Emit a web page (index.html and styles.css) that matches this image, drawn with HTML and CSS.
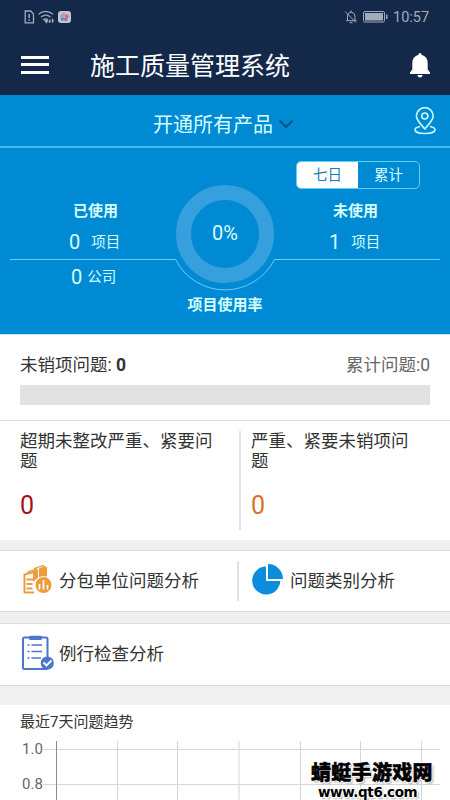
FILE: index.html
```html
<!DOCTYPE html>
<html lang="zh-CN">
<head>
<meta charset="utf-8">
<title>施工质量管理系统</title>
<link rel="stylesheet" href="styles.css">
</head>
<body>
<div class="app">
  <div class="status">
    <svg class="status-left" width="48" height="14" viewBox="0 0 48 14" fill="none" stroke="#a3abba" stroke-width="1.3">
      <path d="M1.2 1h5.5l2.8 3v8.8H1.2z"/><path d="M5.2 4v4M5.2 9.3v1.4" stroke-width="1.5"/>
      <path d="M14.5 4.2q7-5.5 14.5 0M17 7q5-3.8 9.5 0M19 9.8q2.6-2 5 0"/><path d="M21 10.5l1.5 2 1-2zM26 9.5v3M24.8 11l1.2 1.7M28.5 12.7v-3l1.2 1.4"/>
      <rect x="34" y="1" width="13" height="12" rx="3" fill="#c5c4d2" stroke="none"/>
      <g stroke="none" transform="translate(.8 0)"><circle cx="39" cy="4.8" r="1.900" fill="#c592ac"/><circle cx="42" cy="6.3" r="1.900" fill="#c67477"/><circle cx="41" cy="9.2" r="1.900" fill="#9874b8"/><circle cx="37.6" cy="9" r="1.900" fill="#7189ba"/><circle cx="36.9" cy="6.2" r="1.7" fill="#a19dbc"/></g>
    </svg>
    <svg class="status-right" width="44" height="14" viewBox="0 0 44 14" fill="none" stroke="#a3abba">
      <path d="M2 10.7h10.5M3.5 10V6q.2-3.5 3.5-3.9Q10.700 2.500 11 6v4M7 .5v1.600M5.500 12.700h3M1 1.500l11 11"/>
      <rect x="19.500" y="1.500" width="21" height="10.500" rx="1.500"/><rect x="21" y="3" width="18" height="7.500" fill="#a3abba" stroke="none"/><path d="M42.700 4.500v4.500" stroke-width="1.500"/>
    </svg>
    <span class="clock">10:57</span>
  </div>
  <header class="header">
    <div class="menu"><i></i><i></i><i></i></div>
    <h1>施工质量管理系统</h1>
    <svg class="bell" width="20" height="25" viewBox="0 0 20 25" fill="#fff"><path d="M8.500 1.800Q8.500 0 10 0t1.500 1.800Q17.700 3.500 17.700 10v6.500l2.300 3V21H0v-1.500l2.300-3V10Q2.300 3.500 8.500 1.800zM7.300 22h5.400q-.7 2.500-2.700 2.500T7.300 22z"/></svg>
  </header>
  <section class="hero">
    <div class="product">
      <span>开通所有产品</span>
      <svg class="chevron" width="16" height="10" viewBox="0 0 16 10" fill="none" stroke="#075389" stroke-width="2.200"><path d="M1.500 1.500L8 8l6.500-6.500"/></svg>
      <svg class="pin" width="22" height="28" viewBox="0 0 22 28" fill="none" stroke="#c9fbff" stroke-width="1.600"><path d="M10.800 22C7 17 2.400 13.500 2.400 9a8.400 8.400 0 0 1 16.800 0c0 4.500-4.600 8-8.400 13z"/><circle cx="10.800" cy="9" r="3"/><path d="M6 19.500c-3 .6-5 1.700-5 3.200 0 2.200 4.300 3.800 10 3.800s10-1.600 10-3.800c0-1.500-2-2.600-5-3.200"/></svg>
    </div>
    <div class="usage">
      <svg class="gauge" width="450" height="186" viewBox="0 0 450 186" fill="none">
        <circle cx="225" cy="86" r="41.500" stroke="#369fdd" stroke-width="15"/>
        <path d="M10 111.500H175.500A55.500 55.500 0 0 0 274.500 111.500H440" stroke="#6bc9fa"/>
      </svg>
      <div class="stats used">
        <h2>已使用</h2>
        <p class="project"><b>0</b><span>项目</span></p>
        <p class="company"><b>0</b><span>公司</span></p>
      </div>
      <div class="rate"><span class="percent">0%</span><h2>项目使用率</h2></div>
      <div class="right">
        <div class="tabs"><span class="active">七日</span><span>累计</span></div>
        <div class="stats unused"><h2>未使用</h2><p class="project"><b>1</b><span>项目</span></p></div>
      </div>
    </div>
  </section>
  <section class="issues">
    <div class="summary"><span>未销项问题: <b>0</b></span><span class="total">累计问题:0</span></div>
    <div class="bar"></div>
  </section>
  <section class="split">
    <div class="metric red"><p>超期未整改严重、紧要问题</p><strong>0</strong></div>
    <div class="metric orange"><p>严重、紧要未销项问题</p><strong>0</strong></div>
  </section>
  <section class="links double">
    <a class="link"><svg width="32" height="32" viewBox="0 0 32 32" fill="none" stroke="#ed9d3b" stroke-width="2">
      <path d="M2.500 28V9.500L12 7v9M4.500 14.500h7M4.500 19h6M4.500 23.500h6M2.500 27.500H12"/>
      <path d="M5 7.300L15 3.500 M12 3.500L22 .3" stroke-width="1.300"/>
      <path d="M8 6.500l8-2.500v9l-3 2V7zM17 3.300L23 1l2 1.500v10h-8z" fill="#ed9d3b" stroke="none"/>
      <circle cx="21.500" cy="20" r="8.500" fill="#ed9d3b" stroke="#fff" stroke-width="1"/><path d="M17.500 19v5.500M21.500 15v9.500M25.500 20v4.500" stroke="#fff" stroke-width="1.700"/></svg><span>分包单位问题分析</span></a>
    <a class="link second"><svg width="32" height="32" viewBox="0 0 32 32" fill="#0a8ddd"><path d="M14 2.500a14 14 0 1 0 14.200 14.500H14z"/><path d="M16 0a15 15 0 0 1 15 15H16z"/></svg><span>问题类别分析</span></a>
  </section>
  <section class="links single">
    <a class="link"><svg width="34" height="36" viewBox="0 0 34 36" fill="none" stroke="#4d75ce" stroke-width="2">
      <path d="M9 2.500H3.500Q2 2.500 2 4v28.500Q2 34 3.500 34H25q1.500 0 1.500-1.500V4q0-1.500-1.500-1.500h-5"/><rect x="8" y=".8" width="13" height="4.200" rx="1.500" fill="#4d75ce" stroke="none"/><path d="M6.500 10h2M10.500 10H21M6.500 16.500h2M10.500 16.500H21M6.500 23h2M10.500 23H20" stroke-width="1.700"/><circle cx="26.300" cy="28" r="6.600" fill="#4d75ce" stroke="none"/><path d="M22.500 27.500l3 3 5-5" stroke="#fff" stroke-width="1.900"/></svg><span>例行检查分析</span></a>
  </section>
  <section class="trend">
    <h3>最近7天问题趋势</h3>
    <div class="chart">
      <div class="ticks"><span>1.0</span><span>0.8</span></div>
      <svg width="398" height="59" viewBox="0 0 398 59" fill="none"><path d="M0 8.500h397M0 43.500h397" stroke="#d6d6d6"/><path d="M74.500 0v59M134.500 0v59M196 0v59M257.500 0v59M317.500 0v59M378.500 0v59" stroke="#d6d6d6"/><path d="M13.500 0v59" stroke="#8b8b8b"/></svg>
    </div>
  </section>
  <div class="watermark"><div class="brand">蜻蜓手游戏网</div><div class="site">www.qt6.com</div></div>
</div>
</body>
</html>
```
FILE: styles.css
```css
* { box-sizing: border-box; margin: 0; padding: 0; }
body { background: #f0f0f0; }
.app { width: 450px; height: 800px; overflow: hidden; position: relative; font-family: Roboto, "Noto Sans CJK SC", sans-serif; color: #333; }
svg { display: block; flex: none; }
.status { height: 34px; padding: 10px 22px 0 24px; display: flex; background: #14284a; color: #a3abba; }
.status-right { margin-left: auto; margin-right: 5px; }
.clock { font-size: 14.500px; line-height: 15px; width: 35px; white-space: nowrap; }
.header { height: 61px; padding: 0 20px 0 21px; background: #14284a; color: #fff; display: flex; align-items: center; }
.menu { width: 28px; display: grid; gap: 4.500px; margin-bottom: 0; }
.menu i { height: 3px; background: #fff; }
h1 { font-size: 25px; font-weight: 400; line-height: 36px; margin-left: 41px; margin-top: 5px; }
.bell { margin-left: auto; margin-top: 1px; }
.hero { height: 240px; background: #018ad4; color: #d5feff; border-bottom: 1px solid #b9eff8; }
.product { height: 53px; border-bottom: 2px solid #48b7f2; display: flex; align-items: center; padding: 6px 14px 0 153px; font-size: 20px; }
.chevron { margin-left: 5px; }
.pin { margin-left: auto; margin-top: -6px; }
.usage { height: 186px; display: grid; grid-template-columns: 150px 150px 150px; position: relative; }
.gauge { position: absolute; left: 0; top: 0; }
h2 { font-size: 15px; line-height: 20px; font-weight: 700; }
.stats p { display: flex; align-items: center; height: 24px; }
.stats b { font-size: 20px; font-weight: 400; line-height: 24px; margin-top: -1px; }
.stats span { font-size: 14.500px; line-height: 24px; margin-top: 1px; }
.used { padding: 53px 0 0 73px; }
.project { margin: 9px 0 0 -4px; gap: 11px; }
.used .company { margin: 11px 0 0 -2px; gap: 5px; }
.rate { padding-top: 73px; text-align: center; }
.percent { display: block; font-size: 20px; line-height: 24px; }
.rate h2 { margin-top: 50px; }
.right { padding-top: 13px; }
.tabs { margin-left: -4px; width: 124px; height: 28px; border: 1px solid #5fd0f8; border-radius: 5px; display: grid; grid-template-columns: 61px 1fr; overflow: hidden; text-align: center; font-size: 14.500px; line-height: 27px; }
.tabs .active { background: #fff; color: #1681b9; }
.unused { padding: 12px 0 0 33px; }
.issues { height: 86px; background: #fff; border-bottom: 1px solid #ddd; padding: 18px 20px 0; }
.summary { display: flex; justify-content: space-between; font-size: 17.500px; line-height: 24px; }
.total { color: #666; }
.bar { height: 20px; margin-top: 8px; background: #e2e2e2; }
.split { height: 119px; background: #fff; display: grid; grid-template-columns: 239px 1fr; padding-top: 10px; }
.metric { padding-left: 20px; height: 99px; font-size: 17.500px; line-height: 20px; }
.metric p { width: 200px; }
.metric strong { display: block; font-size: 25px; line-height: 30px; font-weight: 400; margin-top: 20px; }
.red strong { color: #a71118; }
.orange { border-left: 2px solid #e2e2e2; padding-left: 10px; }
.orange p { width: 160px; }
.orange strong { color: #dc7227; }
.links { background: #fff; border-top: 1px solid #ddd; border-bottom: 1px solid #ddd; height: 62px; margin-top: 10px; display: flex; align-items: center; font-size: 17.500px; line-height: 26px; }
.link { display: flex; align-items: center; }
.link span { margin-top: -1px; }
.double .link:first-child { width: 237px; padding-left: 22px; }
.double .link:first-child span { margin-left: 5px; }
.second { border-left: 2px solid #e2e2e2; height: 40px; padding-left: 13px; }
.second svg { margin-top: -2px; }
.second span { margin-left: 6px; }
.single { height: 63px; margin-top: 11px; }
.single .link { padding-left: 21px; }
.single svg { margin-top: -3px; }
.single .link span { margin-left: 4px; }
.trend { margin-top: 19px; height: 95px; background: #fff; padding: 6px 0 0 20px; }
h3 { font-size: 15px; line-height: 22px; font-weight: 400; }
.chart { margin-top: 8px; display: flex; color: #666; }
.ticks { width: 23px; font-size: 15px; line-height: 35px; margin-top: -9px; }
.ticks span { display: block; padding-left: 2px; }
.watermark { position: absolute; left: 311px; top: 762px; color: #000; white-space: nowrap; text-shadow: -1px -1px 0 #fff, 1px -1px 0 #fff, -1px 1px 0 #fff, 1px 1px 0 #fff, 2px 2px 2px #aaa; }
.brand { font-size: 20px; font-weight: 900; line-height: 22px; -webkit-text-stroke: .5px #000; letter-spacing: .3px; }
.site { font: bold 13.500px/16px "DejaVu Sans", sans-serif; margin-left: 7px; letter-spacing: -.4px; }
```
